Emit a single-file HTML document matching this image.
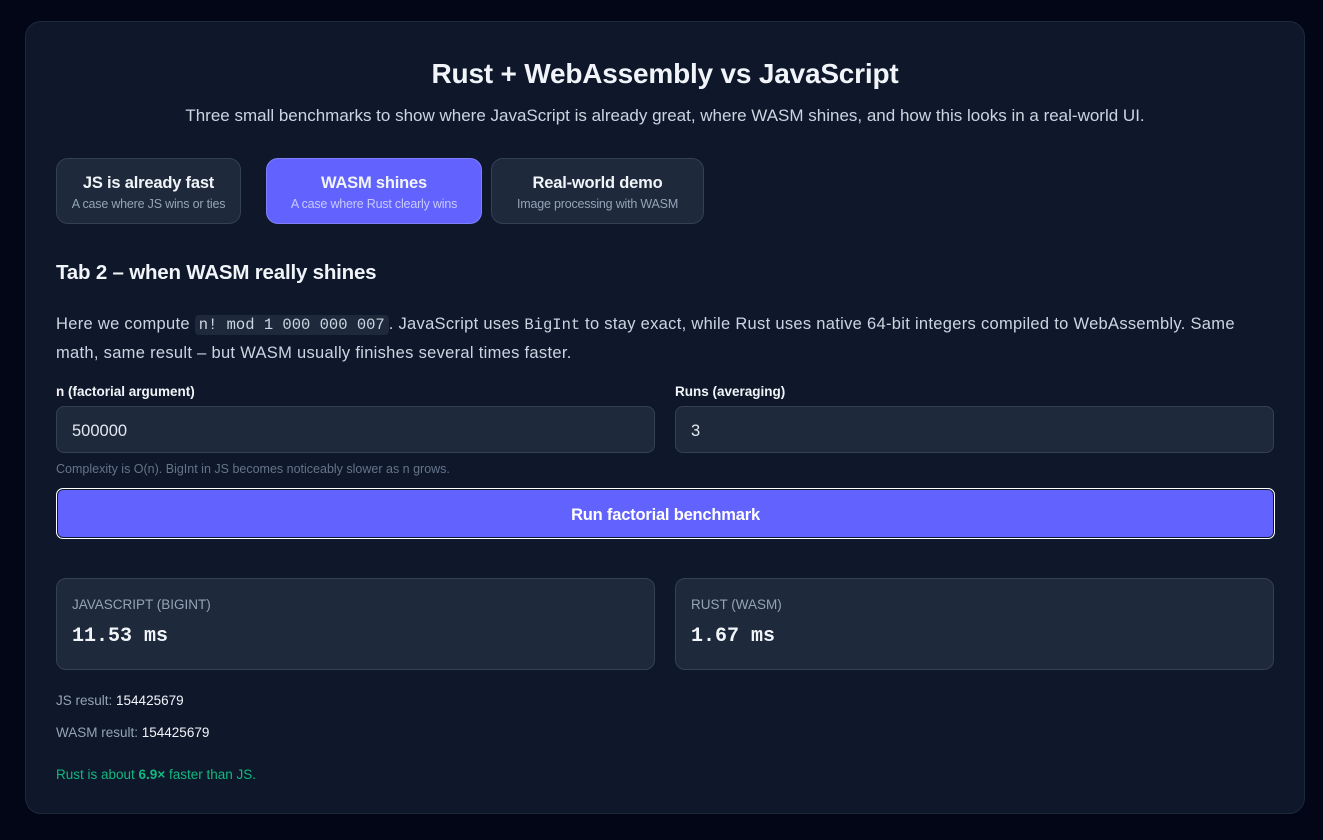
<!DOCTYPE html>
<html><head><meta charset="utf-8"><style>
*{box-sizing:border-box;margin:0;padding:0}
body{width:1323px;height:840px;background:#020617;font-family:"Liberation Sans",sans-serif;color:#e2e8f0;overflow:hidden}
.card{position:absolute;left:25px;top:21px;width:1280px;height:793px;background:#0f172a;border:1px solid #1e293b;border-radius:16px}
.abs{position:absolute}
h1{position:absolute;left:0;width:100%;top:36px;text-align:center;font-size:28px;font-weight:bold;color:#f1f5f9;letter-spacing:-0.2px}
.sub{top:84px;left:0;width:100%;text-align:center;font-size:17px;color:#cbd5e1;letter-spacing:0px}
.tab{position:absolute;top:136px;height:66px;border-radius:12px;background:#1e293b;border:1px solid #334155;text-align:center}
.tab b{display:block;font-size:16.5px;margin-top:15px;color:#f1f5f9;letter-spacing:-0.2px}
.tab span{display:block;font-size:12.5px;color:#94a3b8;margin-top:4px;letter-spacing:-0.2px}
.tab.on{background:#6262ff;border-color:#8080ff}
.tab.on span{color:#c7c9ff}
code{font-family:"Liberation Mono",monospace;font-size:15.5px;letter-spacing:0}
.pill{background:#1e293b;padding:1px 4px;border-radius:4px}
.inp{position:absolute;height:47px;background:#1e293b;border:1px solid #334155;border-radius:8px;font-size:16.5px;padding:15px 15px;color:#e2e8f0}
.res{position:absolute;top:556px;height:92px;background:#1e293b;border:1px solid #334155;border-radius:10px;width:599px}
.res .l{position:absolute;left:15px;top:18px;font-size:13.5px;color:#94a3b8}
.res .v{position:absolute;left:15px;top:46px;font-family:"Liberation Mono",monospace;font-size:20px;font-weight:bold;color:#f1f5f9}
.small{font-size:13.5px;color:#94a3b8}
.small b{color:#f1f5f9;font-weight:normal}
</style></head><body>
<div class="card">
<h1>Rust + WebAssembly vs JavaScript</h1>
<div class="abs sub">Three small benchmarks to show where JavaScript is already great, where WASM shines, and how this looks in a real-world UI.</div>
<div class="tab" style="left:30px;width:185px"><b>JS is already fast</b><span>A case where JS wins or ties</span></div>
<div class="tab on" style="left:240px;width:216px"><b>WASM shines</b><span>A case where Rust clearly wins</span></div>
<div class="tab" style="left:465px;width:213px"><b>Real-world demo</b><span>Image processing with WASM</span></div>
<div class="abs" style="left:30px;top:239px;font-size:20.5px;font-weight:bold;color:#f1f5f9;letter-spacing:-0.2px">Tab 2 – when WASM really shines</div>
<div class="abs" style="left:30px;top:288px;width:1240px;font-size:16.5px;line-height:28px;color:#cbd5e1;letter-spacing:0.3px">Here we compute <code class="pill">n! mod 1 000 000 007</code>. JavaScript uses <code>BigInt</code> to stay exact, while Rust uses native 64-bit integers compiled to WebAssembly. Same<br>math, same result – but WASM usually finishes several times faster.</div>
<div class="abs" style="left:30px;top:362px;font-size:13.5px;font-weight:bold;color:#f1f5f9">n (factorial argument)</div>
<div class="abs" style="left:649px;top:362px;font-size:13.5px;font-weight:bold;color:#f1f5f9">Runs (averaging)</div>
<div class="inp" style="left:30px;top:384px;width:599px">500000</div>
<div class="inp" style="left:649px;top:384px;width:599px">3</div>
<div class="abs" style="left:30px;top:440px;font-size:12.5px;color:#64748b">Complexity is O(n). BigInt in JS becomes noticeably slower as n grows.</div>
<div class="abs" style="left:30px;top:466px;width:1219px;height:51px;background:#6262ff;border:1px solid #fff;box-shadow:inset 0 0 0 1px #0f172a;border-radius:7px;text-align:center;line-height:52px;font-size:16.5px;font-weight:bold;color:#fff;letter-spacing:-0.2px">Run factorial benchmark</div>
<div class="res" style="left:30px"><div class="l">JAVASCRIPT (BIGINT)</div><div class="v">11.53 ms</div></div>
<div class="res" style="left:649px"><div class="l">RUST (WASM)</div><div class="v">1.67 ms</div></div>
<div class="abs small" style="left:30px;top:671px">JS result: <b>154425679</b></div>
<div class="abs small" style="left:30px;top:703px">WASM result: <b>154425679</b></div>
<div class="abs small" style="left:30px;top:745px;color:#10b981">Rust is about <b style="color:#10b981;font-weight:bold">6.9×</b> faster than JS.</div>
</div>
</body></html>
